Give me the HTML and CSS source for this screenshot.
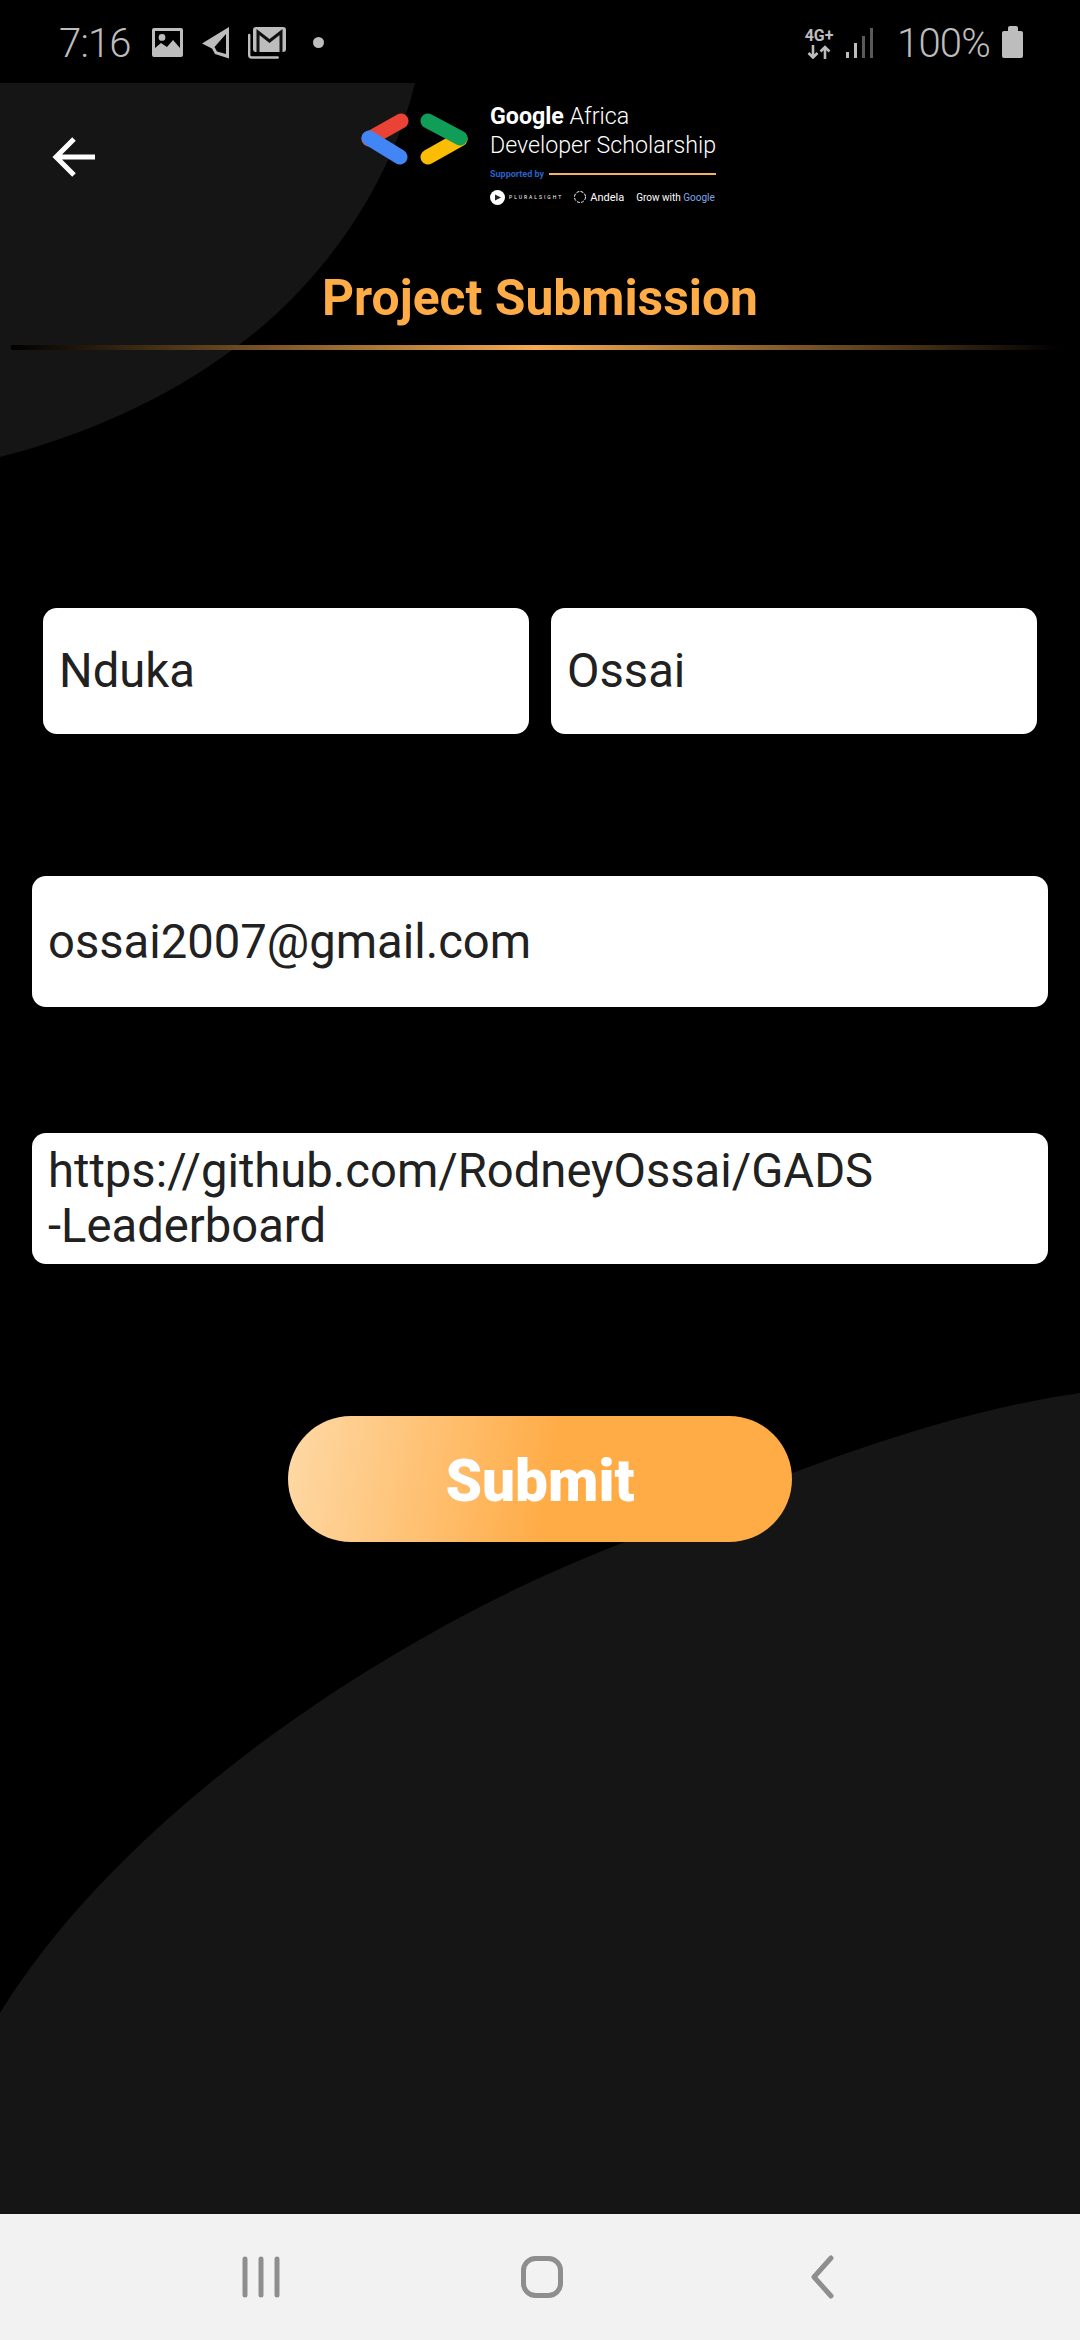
FILE: index.html
```html
<!DOCTYPE html>
<html>

<head>
    <meta charset="utf-8">
    <title>Project Submission</title>
    <link rel="stylesheet" href="styles.css">
</head>

<body>
    <div class="status-bar">
        <div class="status-left">
            <span class="status-time">7:16</span>
            <svg class="status-icon" width="31" height="29" viewBox="0 0 31 29">
                <path fill="#bdbdbd" fill-rule="evenodd" d="M2 0h27a2 2 0 0 1 2 2v25a2 2 0 0 1-2 2H2a2 2 0 0 1-2-2V2a2 2 0 0 1 2-2zM3 3v17l6-5 6 4 6-7 7 8V3zM10 6a3.400 3.400 0 1 1 0 6.800 3.400 3.400 0 0 1 0-6.800z"/>
            </svg>
            <svg class="status-icon icon-send" width="28" height="32" viewBox="0 0 28 32">
                <path fill="#bdbdbd" fill-rule="evenodd" d="M27 0 0 16.500 10 21.500 13 27 27 31.500ZM24 7 12.500 20 15 24.500 24 27Z"/>
            </svg>
            <svg class="status-icon icon-mail" width="38" height="32" viewBox="0 0 38 32">
                <rect x="5" y="0" width="33" height="25" rx="3" fill="#bdbdbd"/>
                <path fill="none" stroke="#111" stroke-width="3" d="M10 25V5l11.500 9L33 5v20"/>
                <path fill="none" stroke="#bdbdbd" stroke-width="2.400" stroke-linecap="round" d="M1.200 8v20a2.500 2.500 0 0 0 2.500 2.500h26"/>
            </svg>
            <span class="status-dot"></span>
        </div>
        <div class="status-right">
            <div class="net-type">
                <span class="net-label">4G+</span>
                <svg width="24" height="14" viewBox="0 0 24 14">
                    <path fill="none" stroke="#bdbdbd" stroke-width="2.600" d="M6 0v12M1.500 8l4.500 4.500L10.500 8M18 14V2M13.500 6.500 18 2l4.500 4.500"/>
                </svg>
            </div>
            <div class="signal">
                <span class="bar bar-1"></span>
                <span class="bar bar-2"></span>
                <span class="bar bar-3 bar-dim"></span>
                <span class="bar bar-4 bar-dim"></span>
            </div>
            <span class="status-battery-text">100%</span>
            <div class="battery"><span class="battery-cap"></span><span class="battery-body"></span></div>
        </div>
    </div>

    <div class="screen">
        <svg class="screen-bg" width="1080" height="2131" viewBox="0 0 1080 2131">
            <path fill="#151515" d="M0 0H415C392 95 330 195 235 265 165 317 85 352 0 374Z"/>
            <path fill="#151515" d="M0 1930C125 1727 395 1547 620 1461 760 1400 930 1331 1080 1310V2131H0Z"/>
        </svg>

        <div class="top-bar">
            <svg class="back-arrow" width="44" height="42" viewBox="0 0 44 42">
                <path fill="none" stroke="#fff" stroke-width="5" d="M44 21H6M23 3 5 21l18 18"/>
            </svg>
            <div class="logo">
                <svg class="logo-mark" width="107" height="52" viewBox="0 0 107 52">
                    <path fill="none" stroke="#ea4335" stroke-width="15" stroke-linecap="round" d="M40 8 8 26"/>
                    <path fill="none" stroke="#4285f4" stroke-width="15" stroke-linecap="round" d="M8 25 39 44"/>
                    <path fill="none" stroke="#fbbc04" stroke-width="15" stroke-linecap="round" d="M99 26 67 44"/>
                    <path fill="none" stroke="#0f9d58" stroke-width="15" stroke-linecap="round" d="M67 8 99 25"/>
                </svg>
                <div class="logo-text">
                    <div class="logo-title"><b>Google</b> Africa</div>
                    <div class="logo-title">Developer Scholarship</div>
                    <div class="logo-support">
                        <span class="logo-support-label">Supported by</span>
                        <span class="logo-support-line"></span>
                    </div>
                    <div class="logo-partners">
                        <svg class="partner-dot" width="15" height="15" viewBox="0 0 15 15">
                            <circle cx="7.500" cy="7.500" r="7.500" fill="#fff"/>
                            <path fill="#222" d="M5 4.500 11 7.500 5 10.500Z"/>
                        </svg>
                        <span class="partner-plural">PLURALSIGHT</span>
                        <svg width="14" height="14" viewBox="0 0 14 14">
                            <circle cx="7" cy="7" r="5.500" fill="none" stroke="#fff" stroke-width="1" stroke-dasharray="3 1.300"/>
                        </svg>
                        <span class="partner-andela">Andela</span>
                        <span class="partner-grow">Grow with <span class="partner-google">Google</span></span>
                    </div>
                </div>
            </div>
        </div>

        <h1 class="page-title">Project Submission</h1>
        <div class="title-line"></div>

        <div class="form">
            <div class="name-row">
                <div class="field field-name">Nduka</div>
                <div class="field field-name">Ossai</div>
            </div>
            <div class="field field-wide">ossai2007@gmail.com</div>
            <div class="field field-wide field-link">https://github.com/RodneyOssai/GADS<br>-Leaderboard</div>
            <div class="submit-button">Submit</div>
        </div>
    </div>

    <div class="nav-bar">
        <svg width="38" height="42" viewBox="0 0 38 42">
            <path fill="none" stroke="#8e8e8e" stroke-width="5" stroke-linecap="round" d="M3 3v36M19 3v36M35 3v36"/>
        </svg>
        <svg width="42" height="42" viewBox="0 0 42 42">
            <rect x="2.500" y="2.500" width="37" height="37" rx="12" fill="none" stroke="#8e8e8e" stroke-width="5"/>
        </svg>
        <svg width="32" height="44" viewBox="0 0 32 44">
            <path fill="none" stroke="#8e8e8e" stroke-width="5" stroke-linecap="round" stroke-linejoin="round" d="M27 3 10 22l17 19"/>
        </svg>
    </div>
</body>

</html>
```

FILE: styles.css
```css
* {
    box-sizing: border-box;
}

body {
    margin: 0;
    width: 1080px;
    height: 2340px;
    display: flex;
    flex-direction: column;
    background-color: #000;
    font-family: Roboto, "Liberation Sans", sans-serif;
    overflow: hidden;
}

/* status bar */
.status-bar {
    height: 83px;
    flex: none;
    display: flex;
    justify-content: space-between;
    padding: 21px 57px 0 59px;
    color: #bdbdbd;
}

.status-left,
.status-right {
    display: flex;
    align-items: flex-start;
}

.status-time,
.status-battery-text {
    font-size: 40px;
    line-height: 46px;
    font-weight: 300;
    letter-spacing: -0.8px;
}

.status-icon {
    margin-top: 7px;
}

.status-time {
    margin-right: 21px;
}

.icon-send {
    margin-left: 19px;
    margin-top: 6px;
}

.icon-mail {
    margin-left: 18px;
    margin-top: 6px;
}

.status-dot {
    width: 11px;
    height: 11px;
    margin: 16px 0 0 27px;
    border-radius: 50%;
    background-color: #bdbdbd;
}

.net-type {
    width: 32px;
    margin-top: 6px;
    display: flex;
    flex-direction: column;
    align-items: center;
}

.net-label {
    font-size: 16px;
    line-height: 18px;
    font-weight: 700;
}

.signal {
    display: flex;
    align-items: flex-end;
    gap: 5px;
    height: 30px;
    margin: 7px 24px 0 11px;
}

.bar {
    width: 3px;
    background-color: #bdbdbd;
}

.bar-1 {
    height: 6px;
}

.bar-2 {
    height: 15px;
}

.bar-3 {
    height: 22px;
}

.bar-4 {
    height: 30px;
}

.bar-dim {
    background-color: #5a5a5a;
}

.status-battery-text {
    margin-right: 12px;
}

.battery {
    width: 21px;
    margin-top: 5px;
    display: flex;
    flex-direction: column;
    align-items: center;
}

.battery-cap {
    width: 10px;
    height: 5px;
    background-color: #bdbdbd;
    border-radius: 2px 2px 0 0;
}

.battery-body {
    width: 21px;
    height: 27px;
    background-color: #bdbdbd;
    border-radius: 2px;
}

/* main screen */
.screen {
    flex: 1;
    position: relative;
}

.screen-bg {
    position: absolute;
    top: 0;
    left: 0;
}

.top-bar {
    position: relative;
    height: 187px;
    display: flex;
    padding: 17px 0 0 51px;
}

.back-arrow {
    margin-top: 36px;
}

.logo {
    display: flex;
    margin-left: 266px;
    height: 90px;
}

.logo-mark {
    margin-top: 13px;
}

.logo-text {
    margin-left: 22px;
    padding-top: 2px;
    color: #fff;
    width: 226px;
}

.logo-title {
    font-size: 23.200px;
    line-height: 29px;
    font-weight: 300;
    white-space: nowrap;
}

.logo-title b {
    font-weight: 700;
}

.logo-support {
    display: flex;
    align-items: center;
    gap: 5px;
    margin-top: 8px;
    height: 12px;
}

.logo-support-label {
    font-size: 9px;
    font-weight: 700;
    color: #2962c9;
    white-space: nowrap;
}

.logo-support-line {
    flex: 1;
    height: 2px;
    background-color: #f5b066;
}

.logo-partners {
    display: flex;
    align-items: center;
    margin-top: 10px;
    height: 14px;
    font-size: 11px;
    white-space: nowrap;
}

.partner-dot {
    margin-right: 4px;
}

.partner-plural {
    font-size: 5px;
    letter-spacing: 2px;
    margin-right: 10px;
}

.partner-andela {
    margin: 0 12px 0 3px;
}

.partner-grow {
    font-size: 10px;
}

.partner-google {
    color: #7fa6e8;
}

.page-title {
    position: relative;
    margin: 0;
    font-size: 49.800px;
    line-height: 56px;
    font-weight: 700;
    color: #ffac47;
    text-align: center;
}

.title-line {
    position: relative;
    height: 5px;
    margin: 19px 20px 0 11px;
    background: linear-gradient(to right, #000, #f7ab50 50%, #000);
}

.form {
    position: relative;
    padding: 258px 32px 0;
    display: flex;
    flex-direction: column;
}

.name-row {
    display: flex;
    gap: 22px;
    padding: 0 11px;
}

.field {
    display: flex;
    align-items: center;
    background-color: #fff;
    border-radius: 14px;
    color: #212121;
    font-size: 47.200px;
    padding-left: 16px;
}

.field-name {
    flex: 1;
    height: 126px;
}

.field-wide {
    height: 131px;
    margin-top: 142px;
}

.field-link {
    display: block;
    margin-top: 126px;
    padding-top: 11px;
    line-height: 55px;
}

.submit-button {
    align-self: center;
    width: 504px;
    height: 126px;
    margin-top: 152px;
    padding-top: 3px;
    border-radius: 63px;
    display: flex;
    align-items: center;
    justify-content: center;
    background: linear-gradient(100deg, #fed9a6 0%, #ffac47 52%);
    color: #fff;
    font-size: 58.500px;
    font-weight: 900;
}

/* navigation bar */
.nav-bar {
    height: 126px;
    flex: none;
    display: flex;
    align-items: center;
    justify-content: space-between;
    padding: 0 244px 0 242px;
    background-color: #f2f2f2;
}
```
